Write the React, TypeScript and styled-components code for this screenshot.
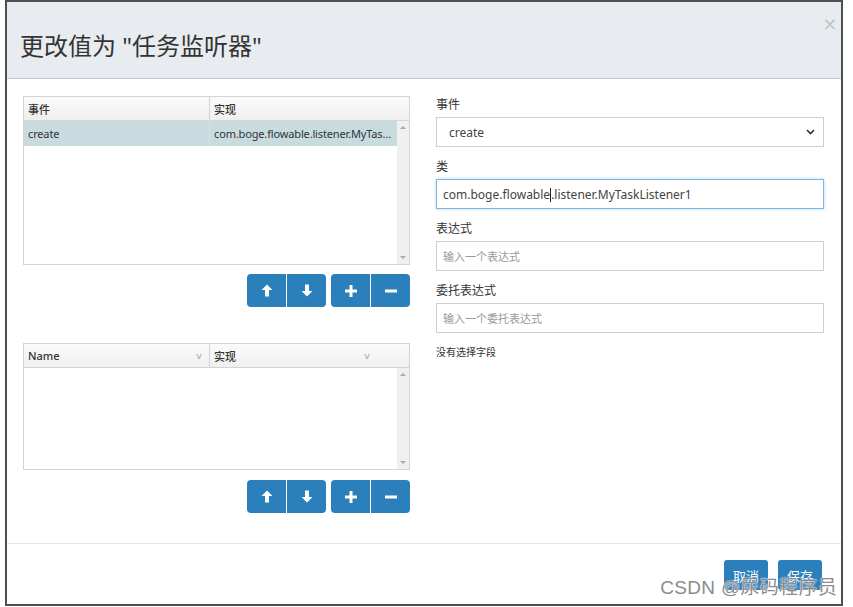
import styled, { createGlobalStyle } from 'styled-components';

const GlobalStyle = createGlobalStyle`
  html, body {
    margin: 0;
    padding: 0;
    background: #ffffff;
  }
  body {
    font-family: "Noto Sans", "Noto Sans CJK SC", sans-serif;
    color: #333;
  }
`;

const Dialog = styled.div`
  position: relative;
  box-sizing: border-box;
  width: 838px;
  height: 606px;
  margin-left: 5px;
  border: 2px solid #4f4f4f;
  display: flex;
  flex-direction: column;
  background: #fff;
`;

const Header = styled.div`
  height: 76px;
  background: #e8ecf0;
  border-bottom: 1px solid #c4c8cc;
  display: flex;
  align-items: center;
  justify-content: space-between;
  padding: 0 4px 0 13px;
`;

const Title = styled.h1`
  margin: 8px 0 0;
  font-size: 24px;
  font-weight: 400;
  color: #333;
  font-family: "Noto Sans", "Noto Sans CJK SC", sans-serif;
`;

const Close = styled.span`
  align-self: flex-start;
  margin-top: 12px;
  font-size: 17px;
  color: #bfc3c6;
  font-family: "DejaVu Sans", sans-serif;
`;

const Body = styled.div`
  flex: 1;
  display: grid;
  grid-template-columns: 387px 388px;
  column-gap: 26px;
  padding: 17px 0 0 16px;
  border-bottom: 1px solid #e5e5e5;
`;

const LeftCol = styled.div`
  display: flex;
  flex-direction: column;
`;

const Grid = styled.div<{ $h: number; $mt?: number }>`
  box-sizing: border-box;
  height: ${(p) => p.$h}px;
  margin-top: ${(p) => p.$mt ?? 0}px;
  border: 1px solid #d4d4d4;
  display: flex;
  flex-direction: column;
  font-size: 11px;
`;

const GridHead = styled.div`
  display: grid;
  grid-template-columns: 186px 1fr;
  height: 23px;
  border-bottom: 1px solid #d4d4d4;
  background: linear-gradient(#fbfbfb, #efefef);
`;

const HeadCell = styled.div<{ $last?: boolean }>`
  display: flex;
  align-items: center;
  justify-content: space-between;
  padding: 0 ${(p) => (p.$last ? 40 : 8)}px 0 4px;
  border-right: ${(p) => (p.$last ? 'none' : '1px solid #d4d4d4')};
  font-weight: 500;
  color: #333;
`;

const Chevron = styled.span`
  color: #b0b0b0;
  font-size: 8px;
  transform: scaleX(1.3);
`;

const GridBody = styled.div`
  flex: 1;
  display: flex;
`;

const Rows = styled.div`
  flex: 1;
  min-width: 0;
`;

const Row = styled.div<{ $selected?: boolean }>`
  display: grid;
  grid-template-columns: 186px minmax(0, 1fr);
  height: 25px;
  background: ${(p) => (p.$selected ? '#c8dce0' : 'transparent')};
`;

const Cell = styled.div<{ $first?: boolean }>`
  align-self: center;
  padding: 0 4px;
  border-right: ${(p) => (p.$first ? '1px solid #d8e2e4' : 'none')};
  line-height: 25px;
  color: #333;
  letter-spacing: -0.15px;
  white-space: nowrap;
  overflow: hidden;
  text-overflow: ellipsis;
`;

const Scrollbar = styled.div`
  width: 12px;
  background: #f0f0f0;
  display: flex;
  flex-direction: column;
  justify-content: space-between;
  align-items: center;
  padding: 5px 0;
`;

const Tri = styled.span<{ $down?: boolean }>`
  width: 0;
  height: 0;
  border-left: 3px solid transparent;
  border-right: 3px solid transparent;
  ${(p) =>
    p.$down
      ? 'border-top: 3px solid #aaa;'
      : 'border-bottom: 3px solid #aaa;'}
`;

const Toolbar = styled.div<{ $mt: number }>`
  display: flex;
  justify-content: flex-end;
  gap: 5px;
  margin-top: ${(p) => p.$mt}px;
`;

const BtnGroup = styled.div`
  display: flex;
  gap: 1px;
  & > button:first-child {
    border-radius: 4px 0 0 4px;
  }
  & > button:last-child {
    border-radius: 0 4px 4px 0;
  }
`;

const IconBtn = styled.button`
  width: 39px;
  height: 33px;
  border: none;
  background: #2b7fbb;
  display: flex;
  align-items: center;
  justify-content: center;
  padding: 0;
`;

const RightCol = styled.div`
  display: flex;
  flex-direction: column;
`;

const Label = styled.label`
  font-size: 12px;
  line-height: 18px;
  color: #333;
  margin-bottom: 3px;
`;

const Field = styled.div<{ $focus?: boolean; $placeholder?: boolean }>`
  box-sizing: border-box;
  height: 30px;
  margin-bottom: 11px;
  border: 1px solid ${(p) => (p.$focus ? '#7fb6e2' : '#cfcfcf')};
  box-shadow: ${(p) => (p.$focus ? '0 0 3px rgba(102,175,233,0.5)' : 'none')};
  display: flex;
  align-items: center;
  justify-content: space-between;
  padding: 0 8px 0 6px;
  font-size: ${(p) => (p.$placeholder ? 11 : 12)}px;
  color: ${(p) => (p.$placeholder ? '#999' : '#444')};
  white-space: nowrap;
`;

const SelectText = styled.span`
  padding-left: 6px;
`;

const Caret = styled.span`
  display: inline-block;
  width: 1px;
  height: 14px;
  background: #222;
  vertical-align: middle;
`;

const Note = styled.div`
  font-size: 10px;
  line-height: 14px;
  margin-top: 1px;
  color: #333;
`;

const Footer = styled.div`
  box-sizing: border-box;
  height: 60px;
  display: flex;
  justify-content: flex-end;
  align-items: flex-start;
  gap: 10px;
  padding: 16px 19px 0 0;
`;

const TextBtn = styled.button`
  width: 44px;
  height: 30px;
  border: none;
  border-radius: 3px;
  background: #2b7fbb;
  color: #fff;
  font-size: 13px;
  font-family: "Noto Sans CJK SC", sans-serif;
  padding: 0;
`;

const Watermark = styled.div`
  position: absolute;
  right: 4px;
  bottom: 5px;
  font-size: 19px;
  font-family: "Liberation Sans", "Noto Sans CJK SC", sans-serif;
  color: #8c8c8c;
  letter-spacing: 0.3px;
  text-shadow: 0 0 2px #fff, 0 0 1px #fff;
  pointer-events: none;
`;

const ArrowUp = () => (
  <svg width="12" height="13" viewBox="0 0 12 13">
    <path d="M6 0.5 L11.5 6 L8 6 L8 12.5 L4 12.5 L4 6 L0.5 6 Z" fill="#fff" />
  </svg>
);

const ArrowDown = () => (
  <svg width="12" height="13" viewBox="0 0 12 13">
    <path d="M6 12.5 L11.5 7 L8 7 L8 0.5 L4 0.5 L4 7 L0.5 7 Z" fill="#fff" />
  </svg>
);

const Plus = () => (
  <svg width="12" height="12" viewBox="0 0 12 12">
    <path d="M4.5 0 H7.5 V4.5 H12 V7.5 H7.5 V12 H4.5 V7.5 H0 V4.5 H4.5 Z" fill="#fff" />
  </svg>
);

const Minus = () => (
  <svg width="12" height="12" viewBox="0 0 12 12">
    <rect x="0" y="4.5" width="12" height="3" fill="#fff" />
  </svg>
);

const SelectArrow = () => (
  <svg width="9" height="6" viewBox="0 0 9 6">
    <path d="M1 1 L4.5 4.5 L8 1" stroke="#333" strokeWidth="1.6" fill="none" />
  </svg>
);

function Buttons({ mt }: { mt: number }) {
  return (
    <Toolbar $mt={mt}>
      <BtnGroup>
        <IconBtn><ArrowUp /></IconBtn>
        <IconBtn><ArrowDown /></IconBtn>
      </BtnGroup>
      <BtnGroup>
        <IconBtn><Plus /></IconBtn>
        <IconBtn><Minus /></IconBtn>
      </BtnGroup>
    </Toolbar>
  );
}

export default function App() {
  return (
    <>
      <GlobalStyle />
      <Dialog>
        <Header>
          <Title>更改值为 "任务监听器"</Title>
          <Close>×</Close>
        </Header>
        <Body>
          <LeftCol>
            <Grid $h={169}>
              <GridHead>
                <HeadCell>事件</HeadCell>
                <HeadCell $last>实现</HeadCell>
              </GridHead>
              <GridBody>
                <Rows>
                  <Row $selected>
                    <Cell $first>create</Cell>
                    <Cell>com.boge.flowable.listener.MyTaskListener1</Cell>
                  </Row>
                </Rows>
                <Scrollbar>
                  <Tri />
                  <Tri $down />
                </Scrollbar>
              </GridBody>
            </Grid>
            <Buttons mt={9} />
            <Grid $h={127} $mt={36}>
              <GridHead>
                <HeadCell>
                  Name <Chevron>v</Chevron>
                </HeadCell>
                <HeadCell $last>
                  实现 <Chevron>v</Chevron>
                </HeadCell>
              </GridHead>
              <GridBody>
                <Rows />
                <Scrollbar>
                  <Tri />
                  <Tri $down />
                </Scrollbar>
              </GridBody>
            </Grid>
            <Buttons mt={10} />
          </LeftCol>
          <RightCol>
            <Label>事件</Label>
            <Field>
              <SelectText>create</SelectText>
              <SelectArrow />
            </Field>
            <Label>类</Label>
            <Field $focus>
              <span>
                com.boge.flowable<Caret />.listener.MyTaskListener1
              </span>
            </Field>
            <Label>表达式</Label>
            <Field $placeholder>输入一个表达式</Field>
            <Label>委托表达式</Label>
            <Field $placeholder>输入一个委托表达式</Field>
            <Note>没有选择字段</Note>
          </RightCol>
        </Body>
        <Footer>
          <TextBtn>取消</TextBtn>
          <TextBtn>保存</TextBtn>
        </Footer>
        <Watermark>CSDN @尿码程序员</Watermark>
      </Dialog>
    </>
  );
}
